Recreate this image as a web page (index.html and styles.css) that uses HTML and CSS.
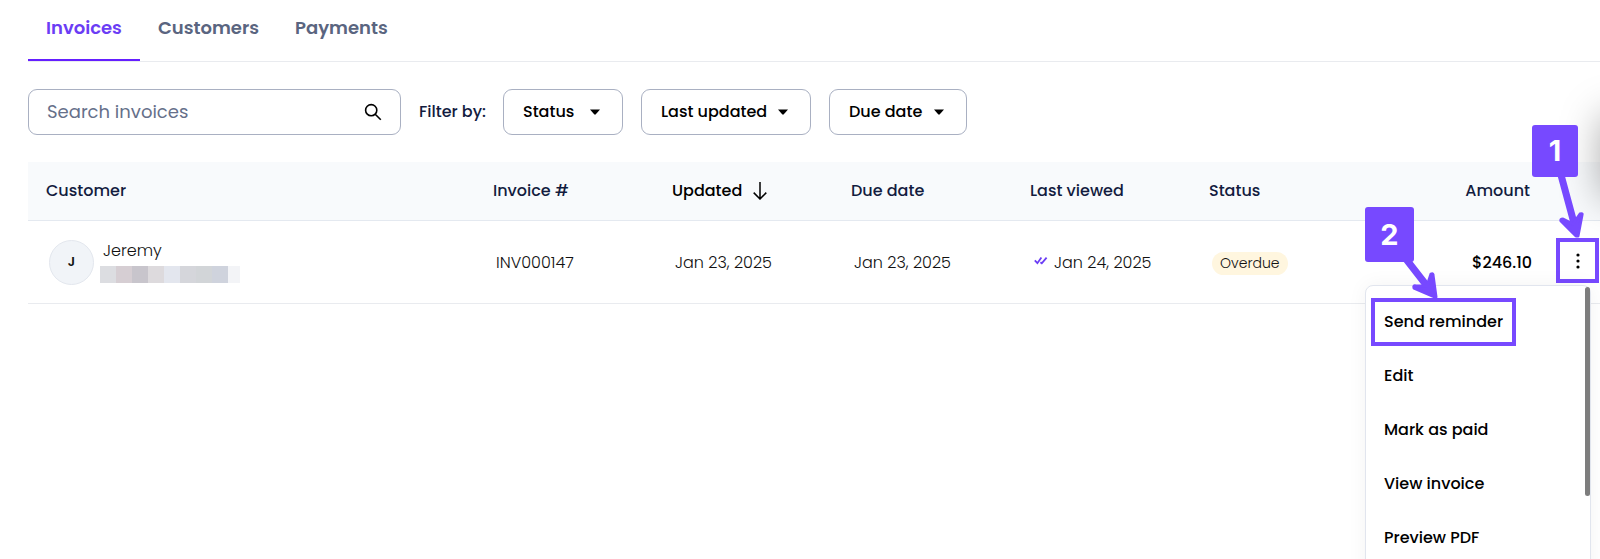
FILE: index.html
```html
<!DOCTYPE html>
<html lang="en">
<head>
    <meta charset="UTF-8">
    <meta name="viewport" content="width=device-width, initial-scale=1.0">
    <title>Invoices</title>
    <link rel="stylesheet" href="styles.css">
</head>
<body>
    <main class="page">
        <nav class="tabs">
            <a class="tab active" href="#invoices">Invoices</a>
            <a class="tab" href="#customers">Customers</a>
            <a class="tab" href="#payments">Payments</a>
        </nav>

        <form class="filters">
            <div class="search">
                <input type="search" placeholder="Search invoices" aria-label="Search invoices">
                <button type="button" class="search-btn" aria-label="Search">
                    <svg width="18" height="18" viewBox="0 0 18 18" fill="none" stroke="#000" stroke-width="1.6">
                        <circle cx="7.2" cy="7.2" r="5.6"/>
                        <path d="M11.2 11.2 L16.8 16.8"/>
                    </svg>
                </button>
            </div>
            <span class="filter-label">Filter by:</span>
            <select class="filter filter-status" aria-label="Status"><option>Status</option></select>
            <select class="filter filter-updated" aria-label="Last updated"><option>Last updated</option></select>
            <select class="filter filter-due" aria-label="Due date"><option>Due date</option></select>
        </form>

        <table class="invoices">
            <colgroup>
                <col class="col-customer">
                <col class="col-data">
                <col class="col-data">
                <col class="col-data">
                <col class="col-data">
                <col class="col-data">
                <col>
                <col class="col-actions">
            </colgroup>
            <thead>
                <tr>
                    <th>Customer</th>
                    <th>Invoice #</th>
                    <th class="sorted">
                        <span class="sort">Updated
                            <svg width="14" height="18" viewBox="0 0 14 18" fill="none" stroke="#000" stroke-width="1.5">
                                <path d="M7 0 V17 M0.7 10.6 L7 17 L13.3 10.6"/>
                            </svg>
                        </span>
                    </th>
                    <th>Due date</th>
                    <th>Last viewed</th>
                    <th>Status</th>
                    <th class="amount">Amount</th>
                    <th></th>
                </tr>
            </thead>
            <tbody>
                <tr>
                    <td class="customer-cell">
                        <div class="customer">
                            <span class="avatar">J</span>
                            <div class="customer-info">
                                <span class="customer-name">Jeremy</span>
                                <!-- masked email -->
                                <div class="mask">
                                    <i class="m1"></i><i class="m2"></i><i class="m3"></i><i class="m4"></i><i class="m5"></i><i class="m6"></i><i class="m7"></i><i class="m8"></i><i class="m9"></i>
                                </div>
                            </div>
                        </div>
                    </td>
                    <td>INV000147</td>
                    <td>Jan 23, 2025</td>
                    <td>Jan 23, 2025</td>
                    <td>
                        <span class="viewed">
                            <svg width="14" height="12" viewBox="0 0 14 12" fill="none" stroke="#6b3df5" stroke-width="1.8">
                                <path d="M0.8 3.4 L3.4 6.2 L7.4 0.6 M6.4 5.2 L7.8 6.3 L12.6 0.6"/>
                            </svg>
                            Jan 24, 2025
                        </span>
                    </td>
                    <td><span class="pill">Overdue</span></td>
                    <td class="amount">$246.10</td>
                    <td class="actions">
                        <button type="button" class="more" aria-label="More actions">
                            <svg width="4" height="16" viewBox="0 0 4 16">
                                <circle cx="2" cy="2" r="1.6"/>
                                <circle cx="2" cy="8" r="1.6"/>
                                <circle cx="2" cy="14" r="1.6"/>
                            </svg>
                        </button>
                        <div class="menu">
                            <button type="button" class="marked">Send reminder</button>
                            <button type="button">Edit</button>
                            <button type="button">Mark as paid</button>
                            <button type="button">View invoice</button>
                            <button type="button">Preview PDF</button>
                            <span class="scroll-thumb"></span>
                        </div>
                    </td>
                </tr>
            </tbody>
        </table>

        <div class="side-panel"></div>

        <!-- numbered steps -->
        <div class="steps">
            <svg class="arrows" width="240" height="180" viewBox="0 0 240 180" fill="none" stroke="#7749ff" stroke-linecap="round" stroke-linejoin="round">
                <path stroke-width="7" d="M201 50 L214 98"/>
                <path fill="#7749ff" stroke-width="3" d="M216 111 L201 96 Q200 94 203 94 L213 99 L220 89 Q223 88 222 90 L218 111 Z"/>
                <path stroke-width="7" d="M46 134 L67 161"/>
                <path fill="#7749ff" stroke-width="3" d="M75 172 L54 163 Q53 160 56 161 L67 161 L71 149 Q73 148 73 150 L76 172 Z"/>
            </svg>
            <span class="step step-one">1</span>
            <span class="step step-two">2</span>
        </div>
    </main>
</body>
</html>
```
FILE: styles.css
```css
* {
    margin: 0;
    padding: 0;
    box-sizing: border-box;
}

body {
    background: #fff;
    color: #111;
    font-family: Poppins, Inter, sans-serif;
    font-size: 16px;
    line-height: 24px;
}

button,
input,
select {
    font: inherit;
    color: inherit;
    background: none;
    border: none;
}

.page {
    position: relative;
    height: 100vh;
    padding-left: 28px;
    overflow: hidden;
}

/* tabs */
.tabs {
    display: flex;
    height: 62px;
    border-bottom: 1px solid #e9ebef;
}

.tab {
    padding: 16px 18px 0;
    color: #5a6580;
    font-size: 18px;
    font-weight: 600;
    text-decoration: none;
}

.tab.active {
    color: #6b3df5;
    border-bottom: 2px solid #651fff;
}

/* search and filters */
.filters {
    display: flex;
    align-items: center;
    gap: 18px;
    padding: 27px 0;
}

.search {
    display: flex;
    align-items: center;
    width: 373px;
    height: 46px;
    padding: 0 18px;
    border: 1px solid #a9b0c2;
    border-radius: 9px;
}

.search input {
    flex: 1;
    min-width: 0;
    font-size: 18px;
    font-weight: 400;
    outline: none;
}

.search input::placeholder {
    color: #66708a;
}

.search-btn {
    display: flex;
}

.filter-label {
    width: 66px;
    color: #131c3f;
    font-weight: 500;
    white-space: nowrap;
}

.filter {
    height: 46px;
    padding: 0 19px;
    border: 1px solid #a9b0c2;
    border-radius: 9px;
    color: #000;
    font-weight: 500;
    appearance: none;
    background: url("data:image/svg+xml,%3Csvg xmlns='http://www.w3.org/2000/svg' width='10' height='6'%3E%3Cpath d='M0 0.5 H10 L5.8 5.3 Q5 6 4.2 5.3 Z'/%3E%3C/svg%3E") no-repeat right 22px center;
}

.filter-status {
    width: 120px;
}

.filter-updated {
    width: 170px;
}

.filter-due {
    width: 138px;
}

/* table */
.invoices {
    width: 100%;
    table-layout: fixed;
    border-collapse: separate;
    border-spacing: 0;
}

.col-customer {
    width: 447px;
}

.col-data {
    width: 179px;
}

.col-actions {
    width: 52px;
}

.invoices th {
    height: 59px;
    padding: 0 18px;
    background: #f8fafc;
    border-bottom: 1px solid #e4e9f0;
    color: #131c3f;
    font-weight: 500;
    text-align: left;
}

.invoices th.sorted {
    color: #000;
}

.sort {
    display: flex;
    align-items: center;
    gap: 11px;
}

.invoices td {
    height: 83px;
    padding: 2px 0 0 21px;
    border-bottom: 1px solid #e9ebef;
    font-weight: 300;
    white-space: nowrap;
}

.invoices td.customer-cell {
    padding-top: 0;
}

.invoices th.amount {
    padding-right: 18px;
    text-align: right;
}

.invoices td.amount {
    padding-right: 16px;
    color: #000;
    font-weight: 500;
    text-align: right;
}

.customer {
    display: flex;
    align-items: center;
    gap: 6px;
}

.avatar {
    display: flex;
    align-items: center;
    justify-content: center;
    width: 45px;
    height: 45px;
    border: 1px solid #e3e7ee;
    border-radius: 50%;
    background: #f1f4f8;
    font-size: 13px;
    font-weight: 600;
}

.customer-info {
    padding-bottom: 2px;
}

.customer-name {
    display: block;
    padding-left: 3px;
}

.mask {
    display: flex;
    height: 17px;
    margin-top: 3px;
}

.mask i {
    width: 16px;
}

.m1 { background: #dcdde1; }
.m2 { background: #d6ced3; }
.m3 { background: #c8c5cc; }
.m4 { background: #dddadd; }
.m5 { background: #e3e6ee; }
.m6 { background: #d5d6db; }
.m7 { background: #d2d5d8; }
.m8 { background: #cfd3dd; }
.mask .m9 { width: 12px; background: #f3f4f7; }

.viewed {
    display: flex;
    align-items: center;
    gap: 6px;
    padding-left: 1px;
}

.pill {
    display: inline-block;
    padding: 0 8px;
    border-radius: 12px;
    background: #fff6df;
    font-size: 14px;
    font-weight: 300;
    line-height: 23px;
}

/* row menu */
.invoices td.actions {
    position: relative;
    padding: 0 1px 3px 8px;
}

.more {
    display: flex;
    align-items: center;
    justify-content: center;
    width: 43px;
    height: 45px;
    border: 4px solid #7749ff;
    background: #fff;
}

.menu {
    position: absolute;
    top: 64px;
    right: 9px;
    display: flex;
    flex-direction: column;
    align-items: flex-start;
    gap: 6px;
    width: 226px;
    height: 400px;
    padding: 12px 5px;
    border: 1px solid #e1e5ee;
    border-radius: 8px;
    background: #fff;
    box-shadow: 0 0 20px rgba(0, 0, 0, 0.05);
}

.menu button {
    height: 48px;
    padding: 0 9px;
    border: 4px solid transparent;
    color: #000;
    font-weight: 500;
}

.menu button.marked {
    border-color: #7749ff;
}

.scroll-thumb {
    position: absolute;
    top: 1px;
    right: 0;
    width: 5px;
    height: 209px;
    border-radius: 3px;
    background: #7d7d7d;
}

.side-panel {
    position: absolute;
    top: 124px;
    right: -60px;
    width: 50px;
    height: 66px;
    box-shadow: 0 0 40px 8px rgba(0, 0, 0, 0.35);
}

/* numbered steps */
.steps {
    position: absolute;
    top: 125px;
    right: 0;
    width: 240px;
    height: 180px;
    pointer-events: none;
}

.step {
    position: absolute;
    display: flex;
    align-items: center;
    justify-content: center;
    border-radius: 3px;
    background: #7749ff;
    color: #fff;
    font-family: Inter, sans-serif;
    font-size: 29px;
    font-weight: 700;
}

.step-one {
    top: 0;
    left: 172px;
    width: 46px;
    height: 52px;
}

.step-two {
    top: 82px;
    left: 5px;
    width: 49px;
    height: 55px;
}
```
